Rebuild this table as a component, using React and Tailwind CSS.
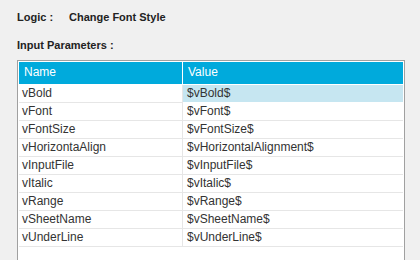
export default function App() {
  const rows = [
    ["vBold", "$vBold$"],
    ["vFont", "$vFont$"],
    ["vFontSize", "$vFontSize$"],
    ["vHorizontaAlign", "$vHorizontalAlignment$"],
    ["vInputFile", "$vInputFile$"],
    ["vItalic", "$vItalic$"],
    ["vRange", "$vRange$"],
    ["vSheetName", "$vSheetName$"],
    ["vUnderLine", "$vUnderLine$"],
  ];
  return (
    <div className="w-[420px] h-[260px] overflow-hidden bg-[#f0f0f0] font-['Liberation_Sans',Arial,sans-serif] text-[#222]">
      <div className="pt-[11px] pl-[17px] flex text-[11px] leading-[13px] font-bold">
        <span className="w-[52px]">Logic :</span>
        <span>Change Font Style</span>
      </div>
      <div className="mt-[15px] pl-[17px] text-[11px] leading-[13px] font-bold">
        Input Parameters :
      </div>
      <div className="mt-[8px] ml-[17px] w-[388px] h-[220px] border border-[#a0a0a0] bg-white p-px">
        <div className="flex h-[23px] bg-[#00aadc] border-b border-white text-white text-[12px] leading-[20px]">
          <div className="w-[164px] pl-[5px] border-r border-white">Name</div>
          <div className="flex-1 pl-[5px]">Value</div>
        </div>
        {rows.map(([name, value], i) => (
          <div key={name} className="flex h-[18px] text-[12px] leading-[17px] text-[#333]">
            <div className="w-[164px] pl-[3px] border-r border-b border-[#e6e6e6]">{name}</div>
            <div className={`flex-1 pl-[4px] border-b ${i === 0 ? "bg-[#c6e6f1] border-white" : "border-[#e6e6e6]"}`}>{value}</div>
          </div>
        ))}
      </div>
    </div>
  );
}
